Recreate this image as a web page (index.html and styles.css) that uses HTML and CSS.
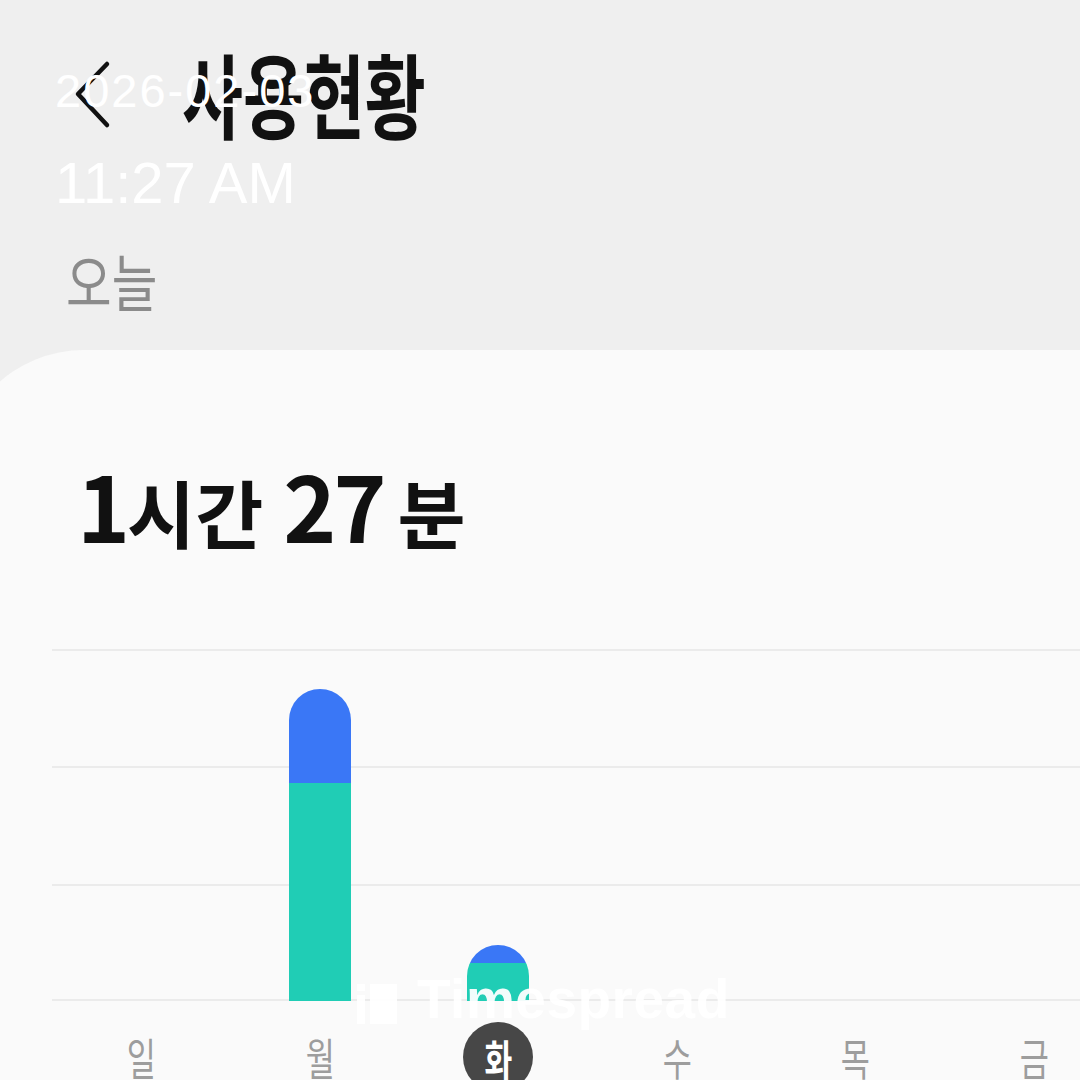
FILE: index.html
```html
<!DOCTYPE html>
<html lang="ko">
<head>
    <meta charset="UTF-8">
    <meta name="viewport" content="width=device-width, initial-scale=1.0">
    <title>사용현황</title>
    <link rel="stylesheet" href="styles.css">
</head>
<body>
    <!-- Top gray area -->
    <header class="header">
        <div class="topbar">
            <svg class="back" viewBox="0 0 40 70" fill="none" stroke="#111" stroke-width="4.5" stroke-linecap="round" stroke-linejoin="round">
                <polyline points="35,4 6,34 35,65"/>
            </svg>
            <h1 class="title">사용현황</h1>
        </div>
        <div class="period">오늘</div>
    </header>

    <!-- Usage card -->
    <main class="card">
        <div class="total">
            <span class="num num-hour">1</span><span class="unit">시간</span><span class="num num-min">27</span><span class="unit unit-min">분</span>
        </div>

        <div class="chart">
            <div class="col"></div>
            <div class="col">
                <div class="bar">
                    <div class="bar-web" style="height: 94px"></div>
                    <div class="bar-app" style="height: 218px"></div>
                </div>
            </div>
            <div class="col">
                <div class="bar">
                    <div class="bar-web" style="height: 18px"></div>
                    <div class="bar-app" style="height: 38px"></div>
                </div>
            </div>
            <div class="col"></div>
            <div class="col"></div>
            <div class="col"></div>
            <div class="col"></div>
        </div>

        <div class="days">
            <div class="day"><span>일</span></div>
            <div class="day"><span>월</span></div>
            <div class="day active"><span>화</span></div>
            <div class="day"><span>수</span></div>
            <div class="day"><span>목</span></div>
            <div class="day"><span>금</span></div>
            <div class="day"><span>토</span></div>
        </div>
    </main>

    <!-- Photo timestamp overlay -->
    <div class="stamp">
        <div class="stamp-date">2026-02-03</div>
        <div class="stamp-time">11:27 AM</div>
    </div>

    <!-- Watermark -->
    <div class="watermark">
        <svg class="mark" viewBox="0 0 40 40" fill="currentColor">
            <rect x="0" y="0" width="8" height="7"/>
            <rect x="0" y="11" width="8" height="29"/>
            <rect x="13" y="0" width="27" height="40"/>
        </svg>
        <span>Timespread</span>
    </div>
</body>
</html>
```

FILE: styles.css
```css
* {
    box-sizing: border-box;
}
html, body {
    margin: 0;
}
body {
    width: 1080px;
    height: 1080px;
    overflow: hidden;
    position: relative;
    background-color: #efefef;
    font-family: "Noto Sans CJK KR", "Noto Sans", sans-serif;
}

.header {
    height: 350px;
    padding-top: 46px;
}
.topbar {
    display: flex;
    align-items: flex-start;
}
.back {
    width: 40px;
    height: 70px;
    margin: 14px 0 0 72px;
}
.title {
    margin: 0 0 0 70px;
    font-size: 92px;
    font-weight: 700;
    line-height: 1;
    color: #111;
    transform: scaleX(0.72);
    transform-origin: left center;
}
.period {
    margin: 111px 0 0 66px;
    font-size: 62px;
    line-height: 1;
    color: #8b8b8b;
    transform: scaleX(0.8);
    transform-origin: left center;
}

.card {
    margin-left: -44px;
    width: 1200px;
    height: 730px;
    padding-top: 104px;
    background-color: #fafafa;
    border-top-left-radius: 128px;
}
.total {
    display: flex;
    align-items: baseline;
    padding-left: 129px;
    height: 100px;
    line-height: 100px;
    font-weight: 700;
    color: #111;
    white-space: nowrap;
}
.num {
    font-size: 90px;
    letter-spacing: -3px;
}
.num-hour {
    margin-left: -8px;
    margin-right: 0;
}
.num-min {
    margin-left: 20px;
}
.unit {
    font-size: 74px;
}
.unit-min {
    margin-left: 14px;
}

.chart {
    margin: 95px 0 0 96px;
    width: 1250px;
    height: 352px;
    display: grid;
    grid-template-columns: repeat(7, 1fr);
    align-items: end;
    justify-items: center;
    background:
        linear-gradient(#ebebeb, #ebebeb) 0 0 / 100% 2px no-repeat,
        linear-gradient(#ebebeb, #ebebeb) 0 117px / 100% 2px no-repeat,
        linear-gradient(#ebebeb, #ebebeb) 0 235px / 100% 2px no-repeat,
        linear-gradient(#ebebeb, #ebebeb) 0 350px / 100% 2px no-repeat;
}
.col {
    display: flex;
    align-items: flex-end;
    height: 100%;
}
.bar {
    width: 62px;
    border-radius: 31px 31px 0 0;
    overflow: hidden;
    display: flex;
    flex-direction: column;
}
.bar-web {
    background-color: #3a77f6;
}
.bar-app {
    background-color: #20cdb5;
}

.days {
    margin: 21px 0 0 96px;
    width: 1250px;
    display: grid;
    grid-template-columns: repeat(7, 1fr);
    justify-items: center;
}
.day {
    width: 70px;
    height: 70px;
    display: flex;
    align-items: center;
    justify-content: center;
    font-size: 44px;
    color: #9d9d9d;
}
.day span {
    display: block;
    transform: scaleX(0.72);
}
.day.active {
    border-radius: 50%;
    background-color: #474747;
    color: #fff;
    font-size: 42px;
    font-weight: 700;
}

.stamp {
    position: absolute;
    left: 55px;
    top: 67px;
    color: #fff;
    font-family: "Liberation Sans", Arial, sans-serif;
    line-height: 1;
}
.stamp-date {
    font-size: 47px;
    letter-spacing: 2px;
}
.stamp-time {
    margin-top: 40px;
    font-size: 58px;
}

.watermark {
    position: absolute;
    left: 357px;
    top: 972px;
    display: flex;
    align-items: center;
    gap: 20px;
    color: rgba(255, 255, 255, 0.94);
    font-family: "Liberation Sans", Arial, sans-serif;
    font-size: 55px;
    font-weight: 700;
    line-height: 1;
    letter-spacing: 0.5px;
}
.mark {
    width: 40px;
    height: 40px;
    margin-top: 8px;
}
```
